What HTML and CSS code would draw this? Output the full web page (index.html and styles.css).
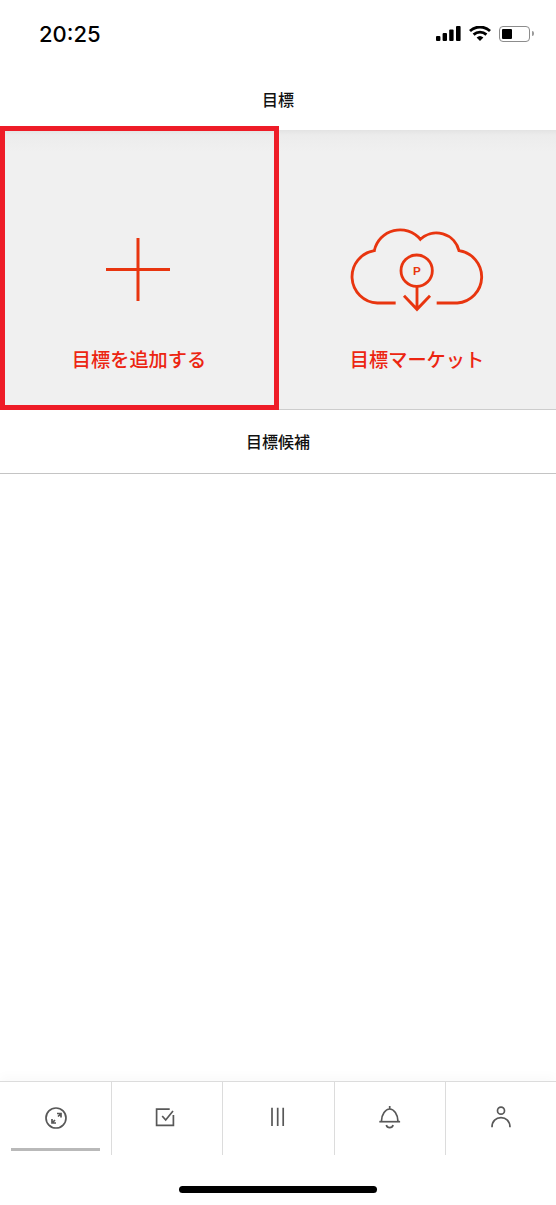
FILE: index.html
```html
<!DOCTYPE html>
<html lang="ja">
<head>
    <meta charset="UTF-8">
    <meta name="viewport" content="width=device-width, initial-scale=1.0">
    <title>目標</title>
    <link rel="stylesheet" href="styles.css">
</head>
<body>
    <div class="page">
        <div class="status-bar">
            <span class="time">20:25</span>
            <div class="status-icons">
                <svg class="icon-signal" width="25" height="15" viewBox="0 0 25 15">
                    <rect x="0" y="10" width="4.4" height="5" rx="1"/>
                    <rect x="6.6" y="7" width="4.4" height="8" rx="1"/>
                    <rect x="13.2" y="3.5" width="4.4" height="11.5" rx="1"/>
                    <rect x="20" y="0" width="4.6" height="15" rx="1"/>
                </svg>
                <svg class="icon-wifi" width="22" height="15" viewBox="0 0 22 15">
                    <path d="M1 5 A14.5 14.5 0 0 1 21 5" />
                    <path d="M4.6 8.6 A9.5 9.5 0 0 1 17.4 8.6" />
                    <path class="wifi-dot" d="M11 15 L7.6 11.6 A5 5 0 0 1 14.4 11.6 Z" />
                </svg>
                <div class="battery">
                    <div class="battery-body"><div class="battery-fill"></div></div>
                    <div class="battery-nub"></div>
                </div>
            </div>
        </div>

        <header class="title-bar">目標</header>

        <div class="tiles">
            <a class="tile">
                <svg class="tile-icon" width="170" height="100" viewBox="0 0 170 100">
                    <path d="M52 49.5 H116 M84 18 V81" />
                </svg>
                <span class="tile-label">目標を追加する</span>
                <div class="highlight"></div>
            </a>
            <a class="tile">
                <svg class="tile-icon" width="170" height="100" viewBox="6 30 510 300">
                    <path class="cloud" d="M197 279 H142 A79 79 0 0 1 133 122 A79 79 0 0 1 271 88 A70 70 0 0 1 387 122 A79 79 0 0 1 382 279 H320" />
                    <circle class="cloud" cx="260" cy="182" r="47" />
                    <path class="cloud" d="M261 229 V298 M222 257 L261 298 L300 257" />
                    <text class="cloud-p" x="261" y="195" text-anchor="middle">P</text>
                </svg>
                <span class="tile-label">目標マーケット</span>
            </a>
        </div>

        <div class="section-title">目標候補</div>

        <main class="content"></main>

        <nav class="tab-bar">
            <div class="tab">
                <svg class="tab-icon" width="30" height="30" viewBox="0 0 30 30">
                    <circle cx="15" cy="15" r="10" />
                    <path d="M16 10.5 H20 V14.5 M20 10.5 L17 13.5" />
                    <path d="M11 16 V20 H15 M11 20 L14 17" />
                </svg>
                <div class="tab-mark"></div>
            </div>
            <div class="tab">
                <svg class="tab-icon" width="30" height="30" viewBox="0 0 30 30">
                    <path d="M17.7 6.2 H4.6 V22.4 H21.4 V12" />
                    <path d="M10.2 13 L13.7 17 L21 8" />
                </svg>
            </div>
            <div class="tab">
                <svg class="tab-icon" width="30" height="30" viewBox="0 0 30 30">
                    <path d="M9 4.7 V23 M14.7 4.7 V23 M20.2 4.7 V23" />
                </svg>
            </div>
            <div class="tab">
                <svg class="tab-icon" width="30" height="30" viewBox="0 0 30 30">
                    <path d="M14.7 3 V6 M6.4 18.5 C6.4 11 10.7 6 14.7 6 C18.7 6 23 11 23 18.5" />
                    <path d="M4.3 18.7 H25.1" />
                    <path d="M11.3 22 C12.2 25.5 17.2 25.5 18.1 22" />
                </svg>
            </div>
            <div class="tab">
                <svg class="tab-icon" width="30" height="30" viewBox="0 0 30 30">
                    <circle cx="15" cy="7.7" r="3.5" />
                    <path d="M6 24.3 C6 18.2 10 14.7 15 14.7 C20 14.7 24 18.2 24 24.3" />
                </svg>
            </div>
        </nav>

        <div class="home-area">
            <div class="home-indicator"></div>
        </div>
    </div>
</body>
</html>
```

FILE: styles.css
```css
:root {
    --accent: #e8350f;
    --label-red: #ec2511;
    --line: #cdcdcd;
    --tab-line: #dcdcdc;
    --icon-gray: #585858;
}

html, body {
    margin: 0;
    padding: 0;
    background-color: #fff;
}

body {
    font-family: "Noto Sans CJK JP", "Liberation Sans", sans-serif;
    color: #111;
}

.page {
    width: 556px;
    height: 1205px;
    display: flex;
    flex-direction: column;
    overflow: hidden;
}

/* ステータスバー */
.status-bar {
    height: 66px;
    flex: none;
    display: flex;
    justify-content: space-between;
    align-items: center;
    padding: 1px 22px 0 39px;
    box-sizing: border-box;
}

.time {
    font-family: Inter, "Liberation Sans", sans-serif;
    font-size: 22px;
    font-weight: 500;
    color: #000;
}

.status-icons {
    display: flex;
    align-items: center;
    gap: 8px;
}

.icon-signal rect {
    fill: #000;
}

.icon-wifi path {
    fill: none;
    stroke: #000;
    stroke-width: 2.8;
}

.icon-wifi .wifi-dot {
    fill: #000;
    stroke: none;
}

.battery {
    display: flex;
    align-items: center;
    gap: 2px;
}

.battery-body {
    width: 31px;
    height: 16px;
    padding: 2px;
    box-sizing: border-box;
    border: 1px solid #8c8c8c;
    border-radius: 4px;
}

.battery-fill {
    width: 10px;
    height: 100%;
    background-color: #000;
    border-radius: 1px;
}

.battery-nub {
    width: 2px;
    height: 5px;
    background-color: #9a9a9a;
    border-radius: 0 2px 2px 0;
}

/* タイトル */
.title-bar {
    height: 64px;
    flex: none;
    display: flex;
    align-items: center;
    justify-content: center;
    padding-top: 1px;
    box-sizing: border-box;
    font-size: 16px;
    font-weight: 500;
}

/* タイル */
.tiles {
    display: grid;
    grid-template-columns: 1fr 1fr;
    flex: none;
    height: 280px;
    box-sizing: border-box;
    border-bottom: 1px solid var(--line);
}

.tile {
    position: relative;
    display: flex;
    flex-direction: column;
    align-items: center;
    padding-top: 90px;
    box-sizing: border-box;
    background: linear-gradient(#e3e3e3, #ececec 5px, #f0f0f0 22px);
}

.tile-icon {
    display: block;
}

.tile-icon path {
    fill: none;
    stroke: var(--accent);
    stroke-width: 3;
}

.tile-icon .cloud {
    fill: none;
    stroke: var(--accent);
    stroke-width: 8.5;
}

.cloud-p {
    font-family: "Liberation Sans", sans-serif;
    font-size: 35px;
    font-weight: 700;
    fill: var(--accent);
}

.tile-label {
    margin-top: 25px;
    font-size: 19.2px;
    line-height: 28px;
    font-weight: 500;
    color: var(--label-red);
}

.highlight {
    position: absolute;
    z-index: 1;
    top: -4px;
    left: 0;
    right: -1px;
    bottom: -1px;
    border: 5px solid #ee1c27;
}

/* 目標候補 */
.section-title {
    height: 64px;
    flex: none;
    display: flex;
    align-items: center;
    justify-content: center;
    padding-bottom: 2px;
    box-sizing: border-box;
    border-bottom: 1px solid #c4c4c4;
    font-size: 16px;
    font-weight: 500;
}

.content {
    flex: 1;
}

/* タブバー */
.tab-bar {
    flex: none;
    height: 74px;
    box-sizing: border-box;
    display: grid;
    grid-template-columns: repeat(5, 1fr);
    border-top: 1px solid var(--tab-line);
    box-shadow: 0 -5px 10px rgba(0, 0, 0, 0.025);
}

.tab {
    display: flex;
    flex-direction: column;
    align-items: center;
    padding-top: 21px;
    box-sizing: border-box;
    border-left: 1px solid var(--tab-line);
}

.tab:first-child {
    border-left: none;
}

.tab-icon {
    display: block;
    flex: none;
}

.tab-icon path, .tab-icon circle {
    fill: none;
    stroke: var(--icon-gray);
    stroke-width: 1.7;
}

.tab-mark {
    width: 89px;
    height: 3px;
    margin-top: 15px;
    background-color: #b9b9b9;
}

/* ホームインジケーター */
.home-area {
    flex: none;
    height: 50px;
    display: flex;
    justify-content: center;
    padding-top: 31px;
    box-sizing: border-box;
}

.home-indicator {
    width: 198px;
    height: 7px;
    background-color: #000;
    border-radius: 4px;
}
```
